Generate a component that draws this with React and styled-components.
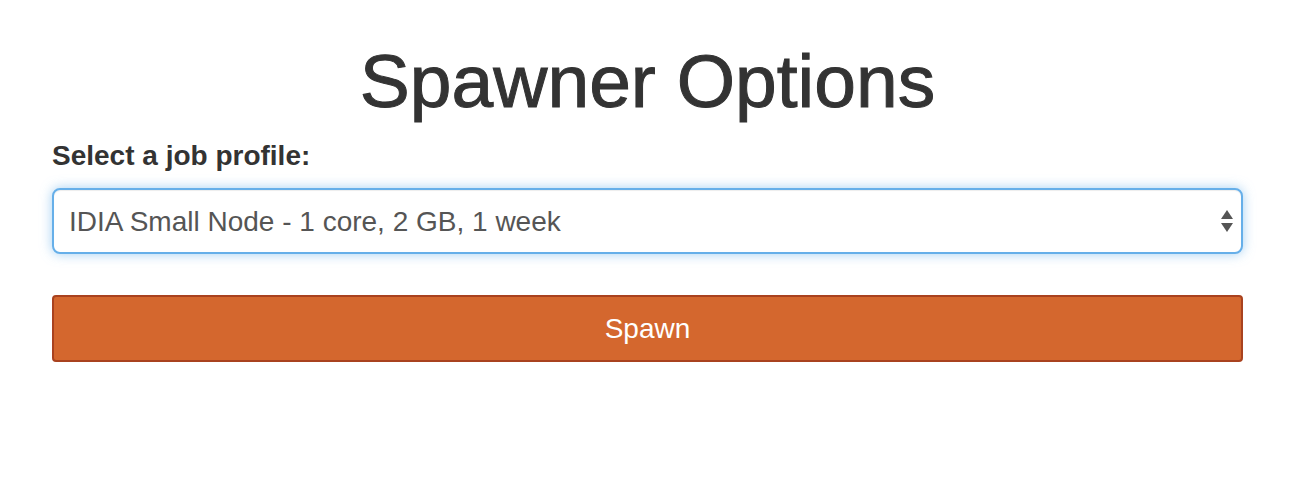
import React from "react";
import styled, { createGlobalStyle } from "styled-components";

const GlobalStyle = createGlobalStyle`
  body {
    margin: 0;
    background: #fff;
    font-family: "Liberation Sans", Arial, sans-serif;
    color: #333;
  }
`;

const Page = styled.div`
  padding: 0 59px 0 52px;
  display: flex;
  flex-direction: column;
`;

const Title = styled.h1`
  margin: 39px 0 0;
  text-align: center;
  font-size: 75px;
  font-weight: 400;
  line-height: 85px;
  color: #333;
  -webkit-text-stroke: 1px #333;
`;

const Label = styled.label`
  margin-top: 14px;
  font-size: 28px;
  font-weight: 700;
  line-height: 36px;
  color: #333;
`;

const SelectWrap = styled.div`
  position: relative;
  margin-top: 14px;
`;

const Select = styled.select`
  display: block;
  width: 100%;
  height: 66px;
  box-sizing: border-box;
  padding: 0 50px 0 15px;
  appearance: none;
  -webkit-appearance: none;
  background: #fff;
  border: 2px solid #66afe9;
  border-radius: 8px;
  box-shadow: inset 0 1px 1px rgba(0, 0, 0, 0.075), 0 0 12px rgba(102, 175, 233, 0.6);
  outline: none;
  font-family: "Liberation Sans", Arial, sans-serif;
  font-size: 28px;
  color: #555;
`;

const Arrows = styled.svg`
  position: absolute;
  right: 10px;
  top: 21px;
  width: 12px;
  height: 24px;
  pointer-events: none;
`;

const SpawnButton = styled.button`
  margin-top: 41px;
  height: 67px;
  width: 100%;
  background: #d4672e;
  border: 2px solid #a9421f;
  border-radius: 4px;
  color: #fff;
  font-family: "Liberation Sans", Arial, sans-serif;
  font-size: 28px;
  cursor: pointer;
`;

export default function App() {
  return (
    <>
      <GlobalStyle />
      <Page>
        <Title>Spawner Options</Title>
        <Label htmlFor="profile">Select a job profile:</Label>
        <SelectWrap>
          <Select id="profile" defaultValue="small">
            <option value="small">IDIA Small Node - 1 core, 2 GB, 1 week</option>
          </Select>
          <Arrows viewBox="0 0 12 24">
            <path d="M6 1 L12 10 L0 10 Z" fill="#555" />
            <path d="M0 14 L12 14 L6 23 Z" fill="#555" />
          </Arrows>
        </SelectWrap>
        <SpawnButton>Spawn</SpawnButton>
      </Page>
    </>
  );
}
